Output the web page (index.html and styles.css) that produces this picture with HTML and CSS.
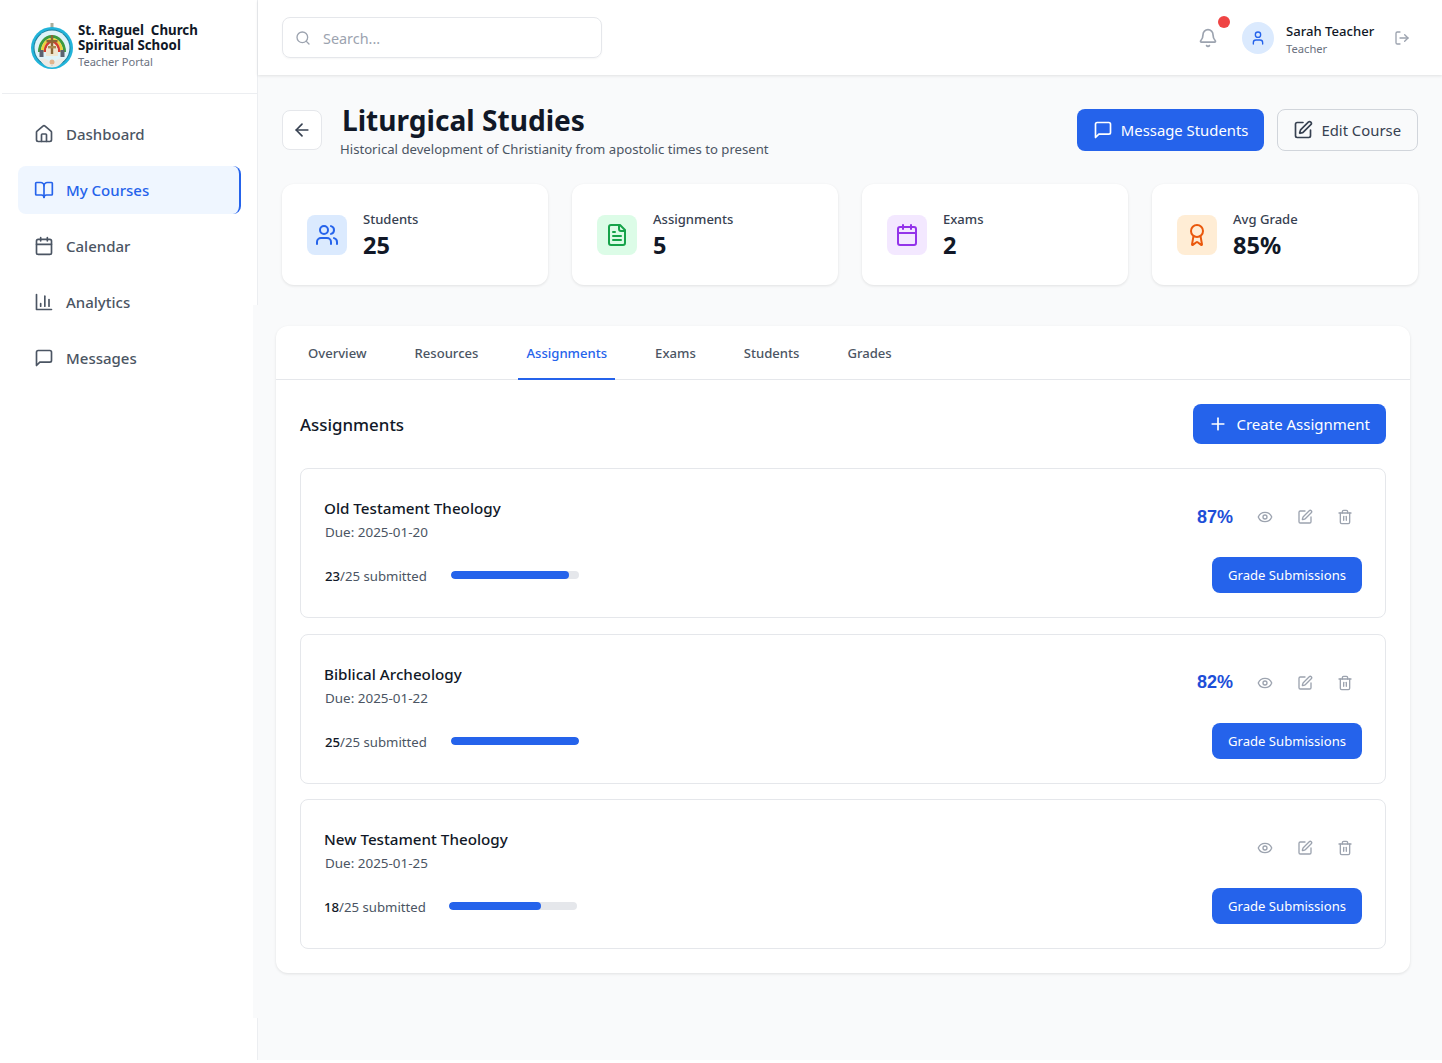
FILE: index.html
```html
<!DOCTYPE html>
<html lang="en">
<head>
<meta charset="utf-8">
<title>Liturgical Studies</title>
<link rel="stylesheet" href="styles.css">
</head>
<body>
<svg class="sprite" aria-hidden="true">
  <symbol id="i-home" viewBox="0 0 24 24"><path d="M15 21v-8a1 1 0 0 0-1-1h-4a1 1 0 0 0-1 1v8"/><path d="M3 10a2 2 0 0 1 .709-1.528l7-5.999a2 2 0 0 1 2.582 0l7 5.999A2 2 0 0 1 21 10v9a2 2 0 0 1-2 2H5a2 2 0 0 1-2-2z"/></symbol>
  <symbol id="i-book" viewBox="0 0 24 24"><path d="M12 7v14"/><path d="M3 18a1 1 0 0 1-1-1V4a1 1 0 0 1 1-1h5a4 4 0 0 1 4 4 4 4 0 0 1 4-4h5a1 1 0 0 1 1 1v13a1 1 0 0 1-1 1h-6a3 3 0 0 0-3 3 3 3 0 0 0-3-3z"/></symbol>
  <symbol id="i-cal" viewBox="0 0 24 24"><path d="M8 2v4"/><path d="M16 2v4"/><rect width="18" height="18" x="3" y="4" rx="2"/><path d="M3 10h18"/></symbol>
  <symbol id="i-chart" viewBox="0 0 24 24"><path d="M3 3v18h18"/><path d="M18 17V9"/><path d="M13 17V5"/><path d="M8 17v-3"/></symbol>
  <symbol id="i-msg" viewBox="0 0 24 24"><path d="M21 15a2 2 0 0 1-2 2H7l-4 4V5a2 2 0 0 1 2-2h14a2 2 0 0 1 2 2z"/></symbol>
  <symbol id="i-search" viewBox="0 0 24 24"><circle cx="11" cy="11" r="8"/><path d="m21 21-4.3-4.3"/></symbol>
  <symbol id="i-bell" viewBox="0 0 24 24"><path d="M10.268 21a2 2 0 0 0 3.464 0"/><path d="M3.262 15.326A1 1 0 0 0 4 17h16a1 1 0 0 0 .74-1.673C19.41 13.956 18 12.499 18 8A6 6 0 0 0 6 8c0 4.499-1.411 5.956-2.738 7.326"/></symbol>
  <symbol id="i-user" viewBox="0 0 24 24"><path d="M19 21v-2a4 4 0 0 0-4-4H9a4 4 0 0 0-4 4v2"/><circle cx="12" cy="7" r="4"/></symbol>
  <symbol id="i-logout" viewBox="0 0 24 24"><path d="M9 21H5a2 2 0 0 1-2-2V5a2 2 0 0 1 2-2h4"/><path d="m16 17 5-5-5-5"/><path d="M21 12H9"/></symbol>
  <symbol id="i-back" viewBox="0 0 24 24"><path d="m12 19-7-7 7-7"/><path d="M19 12H5"/></symbol>
  <symbol id="i-edit" viewBox="0 0 24 24"><path d="M12 3H5a2 2 0 0 0-2 2v14a2 2 0 0 0 2 2h14a2 2 0 0 0 2-2v-7"/><path d="M18.375 2.625a1 1 0 0 1 3 3l-9.013 9.014a2 2 0 0 1-.853.505l-2.873.84a.5.5 0 0 1-.62-.62l.84-2.873a2 2 0 0 1 .506-.852z"/></symbol>
  <symbol id="i-users" viewBox="0 0 24 24"><path d="M16 21v-2a4 4 0 0 0-4-4H6a4 4 0 0 0-4 4v2"/><circle cx="9" cy="7" r="4"/><path d="M22 21v-2a4 4 0 0 0-3-3.87"/><path d="M16 3.13a4 4 0 0 1 0 7.75"/></symbol>
  <symbol id="i-file" viewBox="0 0 24 24"><path d="M15 2H6a2 2 0 0 0-2 2v16a2 2 0 0 0 2 2h12a2 2 0 0 0 2-2V7Z"/><path d="M14 2v4a2 2 0 0 0 2 2h4"/><path d="M10 9H8"/><path d="M16 13H8"/><path d="M16 17H8"/></symbol>
  <symbol id="i-award" viewBox="0 0 24 24"><path d="m15.477 12.89 1.515 8.526a.5.5 0 0 1-.81.47l-3.58-2.687a1 1 0 0 0-1.197 0l-3.586 2.686a.5.5 0 0 1-.81-.469l1.514-8.526"/><circle cx="12" cy="8" r="6"/></symbol>
  <symbol id="i-eye" viewBox="0 0 24 24"><path d="M2.062 12.348a1 1 0 0 1 0-.696 10.75 10.75 0 0 1 19.876 0 1 1 0 0 1 0 .696 10.75 10.75 0 0 1-19.876 0"/><circle cx="12" cy="12" r="3"/></symbol>
  <symbol id="i-trash" viewBox="0 0 24 24"><path d="M3 6h18"/><path d="M19 6v14c0 1-1 2-2 2H7c-1 0-2-1-2-2V6"/><path d="M8 6V4c0-1 1-2 2-2h4c1 0 2 1 2 2v2"/><path d="M10 11v6"/><path d="M14 11v6"/></symbol>
  <symbol id="i-plus" viewBox="0 0 24 24"><path d="M5 12h14"/><path d="M12 5v14"/></symbol>
</svg>

<div class="app">
  <aside class="sidebar">
    <div class="brand">
      <svg class="logo" viewBox="0 0 44 48" aria-hidden="true">
        <rect x="20.500" y="1" width="3" height="5" fill="#a9ad9c"/>
        <circle cx="22" cy="26" r="21" fill="#22b4da"/>
        <circle cx="22" cy="26" r="18.500" fill="#1e7f9c"/>
        <circle cx="22" cy="26" r="17.500" fill="#dff3f8"/>
        <path d="M8 30a14 17 0 0 1 28 0h-3a11 14 0 0 0-22 0z" fill="#3c9a3f"/>
        <path d="M11 30a11 14 0 0 1 22 0h-2.500a8.500 11.500 0 0 0-17 0z" fill="#ecd23a"/>
        <path d="M13.500 30a8.500 11.500 0 0 1 17 0h-2.500a6 9 0 0 0-12 0z" fill="#d23b2e"/>
        <path d="M16 30a6 9 0 0 1 12 0v4H16z" fill="#efe6cf"/>
        <rect x="20.800" y="13" width="2.400" height="19" fill="#8a6636"/>
        <rect x="16.500" y="18" width="11" height="2.400" fill="#8a6636"/>
        <rect x="18" y="24" width="8" height="2.400" fill="#a98a50"/>
        <rect x="9.500" y="28" width="4" height="7" fill="#5b6270"/>
        <rect x="30.500" y="28" width="4" height="7" fill="#5b6270"/>
        <path d="M10 37c5-1.500 9 1 12 7 3-6 7-8.500 12-7-2 5.500-6.500 8.500-12 8.500S12 42.500 10 37z" fill="#eceae4"/>
        <circle cx="22" cy="40" r="2.500" fill="#e2b48c"/>
      </svg>
      <div class="brand-text">
        <div class="brand-name">St. Raguel&nbsp; Church<br>Spiritual School</div>
        <div class="brand-sub">Teacher Portal</div>
      </div>
    </div>
    <nav class="nav">
      <a class="nav-item"><svg class="ico ico-20"><use href="#i-home"/></svg>Dashboard</a>
      <a class="nav-item active"><svg class="ico ico-20"><use href="#i-book"/></svg>My Courses</a>
      <a class="nav-item"><svg class="ico ico-20"><use href="#i-cal"/></svg>Calendar</a>
      <a class="nav-item"><svg class="ico ico-20"><use href="#i-chart"/></svg>Analytics</a>
      <a class="nav-item"><svg class="ico ico-20"><use href="#i-msg"/></svg>Messages</a>
    </nav>
  </aside>

  <div class="main">
    <header class="topbar">
      <div class="search">
        <svg class="ico ico-16 muted"><use href="#i-search"/></svg>
        <span class="placeholder">Search...</span>
      </div>
      <div class="top-right">
        <div class="bell">
          <svg class="ico ico-20 muted"><use href="#i-bell"/></svg>
          <span class="dot"></span>
        </div>
        <div class="avatar"><svg class="ico ico-16"><use href="#i-user"/></svg></div>
        <div class="who">
          <div class="who-name">Sarah Teacher</div>
          <div class="who-role">Teacher</div>
        </div>
        <svg class="ico ico-16 muted logout"><use href="#i-logout"/></svg>
      </div>
    </header>

    <section class="page-head">
      <div class="head-left">
        <button class="back"><svg class="ico ico-20"><use href="#i-back"/></svg></button>
        <div class="titles">
          <h1>Liturgical Studies</h1>
          <p>Historical development of Christianity from apostolic times to present</p>
        </div>
      </div>
      <div class="head-actions">
        <button class="btn btn-primary btn-lg"><svg class="ico ico-20"><use href="#i-msg"/></svg>Message Students</button>
        <button class="btn btn-outline btn-lg"><svg class="ico ico-20"><use href="#i-edit"/></svg>Edit Course</button>
      </div>
    </section>

    <section class="stats">
      <div class="stat"><div class="stat-ico blue"><svg class="ico ico-24"><use href="#i-users"/></svg></div><div><div class="stat-label">Students</div><div class="stat-value">25</div></div></div>
      <div class="stat"><div class="stat-ico green"><svg class="ico ico-24"><use href="#i-file"/></svg></div><div><div class="stat-label">Assignments</div><div class="stat-value">5</div></div></div>
      <div class="stat"><div class="stat-ico purple"><svg class="ico ico-24"><use href="#i-cal"/></svg></div><div><div class="stat-label">Exams</div><div class="stat-value">2</div></div></div>
      <div class="stat"><div class="stat-ico orange"><svg class="ico ico-24"><use href="#i-award"/></svg></div><div><div class="stat-label">Avg Grade</div><div class="stat-value">85%</div></div></div>
    </section>

    <div class="panel-wrap">
      <section class="panel">
        <div class="tabs">
          <a class="tab">Overview</a>
          <a class="tab">Resources</a>
          <a class="tab current">Assignments</a>
          <a class="tab">Exams</a>
          <a class="tab">Students</a>
          <a class="tab">Grades</a>
        </div>
        <div class="panel-body">
          <div class="panel-head">
            <h2>Assignments</h2>
            <button class="btn btn-primary btn-create"><svg class="ico ico-20"><use href="#i-plus"/></svg>Create Assignment</button>
          </div>
          <div class="list">
            <article class="card">
              <div class="card-left">
                <h3>Old Testament Theology</h3>
                <div class="due">Due: 2025-01-20</div>
                <div class="progress-row">
                  <span class="count"><b>23</b>/25 submitted</span>
                  <div class="bar"><div class="fill" style="width:92%"></div></div>
                </div>
              </div>
              <div class="card-right">
                <div class="actions">
                  <span class="score">87%</span>
                  <svg class="ico ico-16 faint"><use href="#i-eye"/></svg>
                  <svg class="ico ico-16 faint"><use href="#i-edit"/></svg>
                  <svg class="ico ico-16 faint"><use href="#i-trash"/></svg>
                </div>
                <button class="btn btn-primary btn-grade">Grade Submissions</button>
              </div>
            </article>
            <article class="card">
              <div class="card-left">
                <h3>Biblical Archeology</h3>
                <div class="due">Due: 2025-01-22</div>
                <div class="progress-row">
                  <span class="count"><b>25</b>/25 submitted</span>
                  <div class="bar"><div class="fill" style="width:100%"></div></div>
                </div>
              </div>
              <div class="card-right">
                <div class="actions">
                  <span class="score">82%</span>
                  <svg class="ico ico-16 faint"><use href="#i-eye"/></svg>
                  <svg class="ico ico-16 faint"><use href="#i-edit"/></svg>
                  <svg class="ico ico-16 faint"><use href="#i-trash"/></svg>
                </div>
                <button class="btn btn-primary btn-grade">Grade Submissions</button>
              </div>
            </article>
            <article class="card">
              <div class="card-left">
                <h3>New Testament Theology</h3>
                <div class="due">Due: 2025-01-25</div>
                <div class="progress-row">
                  <span class="count count-tight"><b>18</b>/25 submitted</span>
                  <div class="bar"><div class="fill" style="width:72%"></div></div>
                </div>
              </div>
              <div class="card-right">
                <div class="actions">
                  <svg class="ico ico-16 faint"><use href="#i-eye"/></svg>
                  <svg class="ico ico-16 faint"><use href="#i-edit"/></svg>
                  <svg class="ico ico-16 faint"><use href="#i-trash"/></svg>
                </div>
                <button class="btn btn-primary btn-grade">Grade Submissions</button>
              </div>
            </article>
          </div>
        </div>
      </section>
    </div>
  </div>
</div>
</body>
</html>
```

FILE: styles.css
```css
* { box-sizing: border-box; }
html, body { margin: 0; background: #fff; }
body { font-family: "Noto Sans", "Open Sans", sans-serif; color: #111827; overflow: hidden; height: 1063px; }
.sprite { display: none; }
h1, h2, h3, p { margin: 0; }
button { font: inherit; cursor: pointer; }

.ico { fill: none; stroke: currentColor; stroke-width: 2; stroke-linecap: round; stroke-linejoin: round; flex: none; display: block; }
.ico-16 { width: 16px; height: 16px; }
.ico-20 { width: 20px; height: 20px; }
.ico-24 { width: 24px; height: 24px; }
.muted { color: #9ca3af; }
.faint { color: #9ca3af; }

.app { display: flex; height: 1060px; background: #f9fafb; }

/* Sidebar */
.sidebar { width: 258px; flex: none; background: #fff; border-right: 1px solid #eceef1; }
.brand { height: 94px; padding: 22px 0 0 28px; display: flex; gap: 4px; border-bottom: 1px solid #eceef1; margin-left: 2px; }
.logo { width: 44px; height: 48px; flex: none; }
.brand-text { padding-top: 1px; }
.brand-name { font-size: 13.3px; line-height: 15px; font-weight: 700; color: #111827; }
.brand-sub { font-size: 11.1px; line-height: 16px; color: #6b7280; margin-top: 1px; }
.nav { padding: 16px 16px 0 18px; display: flex; flex-direction: column; gap: 8px; }
.nav-item { height: 48px; display: flex; align-items: center; gap: 12px; padding-left: 16px; border-radius: 8px; font-size: 15px; font-weight: 500; color: #4b5563; }
.nav-item.active { background: #eff6ff; color: #2563eb; border-right: 2px solid #2563eb; }

/* Top bar */
.main { flex: 1; min-width: 0; display: flex; flex-direction: column; }
.topbar { height: 75px; flex: none; background: #fff; box-shadow: 0 1px 3px rgba(0,0,0,.1); display: flex; align-items: center; justify-content: space-between; padding: 0 32px 0 24px; }
.search { width: 320px; height: 41px; border: 1px solid #e5e7eb; border-radius: 8px; display: flex; align-items: center; gap: 12px; padding-left: 12px; font-size: 14.4px; color: #9ca3af; box-shadow: 0 1px 2px rgba(0,0,0,.04); }
.placeholder { padding-top: 2px; }
.top-right { display: flex; align-items: center; }
.bell { position: relative; margin-right: 24px; }
.dot { position: absolute; top: -12px; right: -12px; width: 12px; height: 12px; border-radius: 50%; background: #ef4444; }
.avatar { width: 32px; height: 32px; border-radius: 50%; background: #dbeafe; color: #2563eb; display: flex; align-items: center; justify-content: center; margin-right: 12px; }
.who { margin-right: 20px; padding-top: 3px; width: 88px; white-space: nowrap; }
.who-name { font-size: 13.1px; line-height: 20px; font-weight: 500; color: #111827; }
.who-role { font-size: 11.2px; line-height: 16px; color: #6b7280; }

/* Page head */
.page-head { display: flex; align-items: flex-start; justify-content: space-between; padding: 34px 24px 0; }
.head-left { display: flex; gap: 20px; }
.back { width: 40px; height: 40px; margin-top: 1px; background: #fff; border: 1px solid #e5e7eb; border-radius: 8px; color: #374151; display: flex; align-items: center; justify-content: center; padding: 0; }
.titles h1 { font-size: 28.1px; line-height: 24px; margin-top: -1px; font-weight: 700; color: #111827; }
.titles p { font-size: 13.15px; line-height: 20px; color: #4b5563; margin: 7px 0 0 -2px; }
.head-actions { display: flex; gap: 13px; }
.btn { display: inline-flex; align-items: center; justify-content: center; border-radius: 8px; border: 1px solid transparent; font-size: 15px; }
.btn-primary { background: #2563eb; color: #fff; }
.btn-outline { background: transparent; border-color: #d1d5db; color: #374151; }
.btn-lg { height: 42px; gap: 8px; padding: 0 15px; font-size: 14.85px; }
.btn-lg.btn-outline { padding: 0 16px 0 15px; }

/* Stats */
.stats { display: grid; grid-template-columns: repeat(4, 1fr); gap: 24px; padding: 25px 24px 0; }
.stat { height: 101px; background: #fff; border-radius: 12px; box-shadow: 0 1px 3px rgba(0,0,0,.1); display: flex; align-items: center; gap: 16px; padding-left: 25px; }
.stat-ico { width: 40px; height: 40px; border-radius: 8px; display: flex; align-items: center; justify-content: center; }
.blue { background: #dbeafe; color: #2563eb; }
.green { background: #dcfce7; color: #16a34a; }
.purple { background: #f3e8ff; color: #9333ea; }
.orange { background: #ffedd5; color: #ea580c; }
.stat-label { font-size: 13.05px; line-height: 20px; font-weight: 500; color: #374151; }
.stat-value { font-size: 23.5px; line-height: 32px; font-weight: 700; color: #111827; }

/* Panel */
.panel-wrap { position: relative; margin: 20px 0 0 -5px; padding: 21px 23px 45px; background: #f9fafb; }
.panel { width: 1134px; background: #fff; border-radius: 12px; box-shadow: 0 1px 3px rgba(0,0,0,.1); }
.tabs { height: 54px; display: flex; gap: 32px; padding: 0 24px; border-bottom: 1px solid #e5e7eb; }
.tab { padding: 2px 8px 0; display: flex; align-items: center; font-size: 13.1px; font-weight: 500; color: #4b5563; border-bottom: 2px solid transparent; margin-bottom: -1px; }
.tab.current { color: #2563eb; border-bottom-color: #2563eb; }
.panel-body { padding: 24px; }
.panel-head { display: flex; align-items: center; justify-content: space-between; margin-bottom: 24px; }
.panel-head h2 { font-size: 16.9px; line-height: 28px; padding-top: 2px; font-weight: 500; color: #111827; }
.btn-create { height: 40px; gap: 8px; padding: 0 15px 0 14px; }
.list { display: flex; flex-direction: column; gap: 15.5px; }
.card { height: 150px; border: 1px solid #e5e7eb; border-radius: 8px; display: flex; justify-content: space-between; padding: 23px 23px 24px; }
.card h3 { font-size: 15.2px; line-height: 24px; font-weight: 500; color: #111827; margin-top: 4px; }
.due { font-size: 13.45px; line-height: 20px; color: #4b5563; margin: 2px 0 0 1px; }
.progress-row { display: flex; align-items: center; gap: 24px; margin: 24px 0 0 1px; }
.count { font-size: 13.2px; line-height: 20px; color: #4b5563; }
.count-tight { margin: 0 -1px; }
.count b { font-weight: 500; color: #111827; }
.bar { width: 128px; height: 8px; margin-bottom: 2px; border-radius: 9999px; background: #e5e7eb; overflow: hidden; }
.fill { height: 100%; border-radius: 9999px; background: #2563eb; }
.card-right { display: flex; flex-direction: column; align-items: flex-end; justify-content: space-between; }
.actions { display: flex; align-items: center; gap: 24px; height: 26px; padding-right: 9px; margin-top: 12px; }
.score { font-family: "Liberation Sans", Arial, sans-serif; font-size: 18px; font-weight: 700; color: #1d4ed8; }
.btn-grade { width: 150px; height: 36px; padding-top: 1px; font-size: 13.1px; }
```
